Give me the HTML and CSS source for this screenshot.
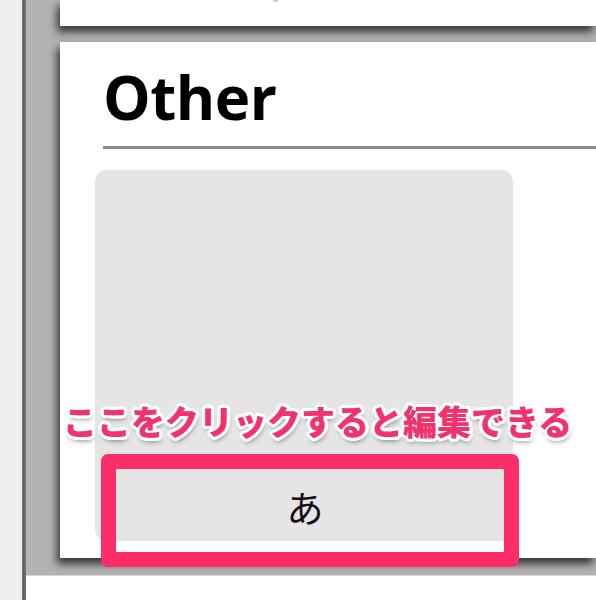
FILE: index.html
```html
<!DOCTYPE html>
<html lang="ja">
<head>
<meta charset="utf-8">
<title>Other</title>
<link rel="stylesheet" href="styles.css">
</head>
<body>
<div class="app">
  <div class="rail"></div>
  <div class="divider"></div>
  <div class="main">
    <div class="stage">
      <div class="card card-top"><span class="mark"></span></div>
      <div class="card card-main">
        <div class="heading"><h2>Other</h2></div>
        <div class="panel">
          <div class="field">あ</div>
        </div>
      </div>
    </div>
    <div class="footer"></div>
  </div>
  <div class="callout">ここをクリックすると編集できる</div>
  <div class="frame"></div>
</div>
</body>
</html>
```
FILE: styles.css
```css
html, body {
  margin: 0;
  padding: 0;
  background: #ffffff;
}
.app {
  position: relative;
  width: 596px;
  height: 600px;
  overflow: hidden;
  display: flex;
}
.rail {
  width: 22px;
  background: #efefef;
}
.divider {
  width: 4px;
  background: linear-gradient(to right, #8a8a8a 0, #5e5e5e 1px, #6a6a6a 3px, #7c7c7c 4px);
}
.main {
  flex: 1;
  display: flex;
  flex-direction: column;
}
.stage {
  height: 575px;
  box-sizing: border-box;
  background: #b3b3b3;
  padding: 0 0 17px 34px;
  display: flex;
  flex-direction: column;
  gap: 16px;
}
.card {
  background: #ffffff;
  box-shadow: -3px 6px 8px rgba(0, 0, 0, 0.7);
}
.card-top {
  height: 26px;
  position: relative;
}
.mark {
  position: absolute;
  left: 213px;
  top: 0;
  width: 5px;
  height: 2px;
  border-radius: 0 0 3px 3px;
  background: #c8c8c8;
}
.card-main {
  height: 516px;
  box-sizing: border-box;
  padding: 24px 0 0 35px;
}
.heading {
  margin-left: 8px;
  padding-bottom: 18px;
  border-bottom: 3px solid #8c8c8c;
}
.heading h2 {
  margin: 0;
  font-family: "Open Sans", "DejaVu Sans", sans-serif;
  font-weight: 700;
  font-size: 60px;
  line-height: 62px;
  color: #000000;
  letter-spacing: -0.5px;
}
.panel {
  margin-top: 21px;
  width: 418px;
  height: 371px;
  box-sizing: border-box;
  padding: 0 8px 0 10px;
  background: #e5e5e5;
  border-radius: 12px;
  display: flex;
  flex-direction: column;
  justify-content: flex-end;
}
.field {
  height: 72px;
  line-height: 76px;
  text-align: center;
  font-family: "Noto Sans CJK JP", sans-serif;
  font-size: 37px;
  color: #111111;
}
.footer {
  flex: 1;
  background: #ffffff;
  border-top: 1px solid #d6d6d6;
}
.callout {
  position: absolute;
  left: 63px;
  top: 403px;
  font-family: "Noto Sans CJK JP", sans-serif;
  font-weight: 900;
  font-size: 34px;
  line-height: 36px;
  color: #f2326c;
  white-space: nowrap;
  text-shadow:
    3px 0 0 #fff, -3px 0 0 #fff, 0 3px 0 #fff, 0 -3px 0 #fff,
    2px 2px 0 #fff, -2px 2px 0 #fff, 2px -2px 0 #fff, -2px -2px 0 #fff,
    3px 1px 0 #fff, -3px 1px 0 #fff, 3px -1px 0 #fff, -3px -1px 0 #fff,
    1px 3px 0 #fff, -1px 3px 0 #fff, 1px -3px 0 #fff, -1px -3px 0 #fff,
    1px 4px 5px rgba(0, 0, 0, 0.45);
}
.frame {
  position: absolute;
  left: 101px;
  top: 454px;
  width: 418px;
  height: 113px;
  box-sizing: border-box;
  border: 15px solid #fd2d69;
  border-radius: 7px;
}
```
